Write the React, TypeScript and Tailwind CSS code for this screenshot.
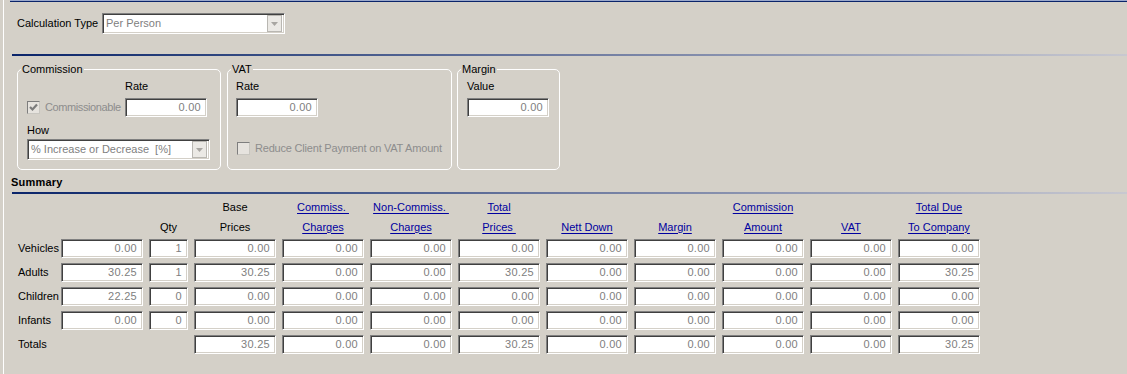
import React from "react";

const sunken =
  "border border-t-[#808080] border-l-[#808080] border-r-white border-b-white shadow-[inset_1px_1px_0_#404040,inset_-1px_-1px_0_#d4d0c8] bg-white";

function Field({ value, className = "" }: { value?: string; className?: string }) {
  return (
    <div
      className={`${sunken} h-[19px] flex items-center justify-end pr-[5px] text-[#808080] tracking-[0.3px] ${className}`}
    >
      {value}
    </div>
  );
}

function Combo({ text, className = "" }: { text: string; className?: string }) {
  return (
    <div className={`${sunken} h-[21px] flex items-center pl-[3px] pr-[2px] text-[#808080] ${className}`}>
      <span className="flex-1 whitespace-pre">{text}</span>
      <div className="w-[15px] h-[17px] border border-[#b9b7b2] bg-[#ebe9e5] flex items-center justify-center">
        <svg width="7" height="4" viewBox="0 0 7 4">
          <path d="M0 0 H7 L3.5 4 Z" fill="#a8a6a2" />
        </svg>
      </div>
    </div>
  );
}

function CheckBox({ checked }: { checked?: boolean }) {
  return (
    <div className="w-[13px] h-[13px] border border-t-[#7e7e7e] border-l-[#7e7e7e] border-r-[#c8c6c0] border-b-[#c8c6c0] bg-[#e6e3de] flex items-center justify-center">
      {checked && (
        <svg width="9" height="9" viewBox="0 0 9 9">
          <path d="M1 4 L3.5 6.5 L8 1.5" stroke="#7c7c7c" strokeWidth="2.2" fill="none" />
        </svg>
      )}
    </div>
  );
}

function Group({ title, className = "", children }: { title: string; className?: string; children: React.ReactNode }) {
  return (
    <fieldset className={`border border-white rounded-[5px] h-[107px] ${className}`}>
      <legend className="ml-[3px] px-px leading-[13px]">{title}</legend>
      {children}
    </fieldset>
  );
}

function HeadLink({ text }: { text: string }) {
  return <span className="text-[#0000a0] underline underline-offset-[2px] whitespace-pre">{text}</span>;
}

const headTop: (React.ReactNode | null)[] = [
  null,
  null,
  null,
  "Base",
  <HeadLink text="Commiss. " />,
  <HeadLink text="Non-Commiss. " />,
  <HeadLink text="Total" />,
  null,
  null,
  <HeadLink text="Commission" />,
  null,
  <HeadLink text="Total Due" />,
];

const headBottom: (React.ReactNode | null)[] = [
  null,
  null,
  "Qty",
  "Prices",
  <HeadLink text="Charges" />,
  <HeadLink text="Charges" />,
  <HeadLink text="Prices " />,
  <HeadLink text="Nett Down" />,
  <HeadLink text="Margin" />,
  <HeadLink text="Amount" />,
  <HeadLink text="VAT" />,
  <HeadLink text="To Company" />,
];

const rows: { label: string; values: (string | null)[] }[] = [
  { label: "Vehicles", values: ["0.00", "1", "0.00", "0.00", "0.00", "0.00", "0.00", "0.00", "0.00", "0.00", "0.00"] },
  { label: "Adults", values: ["30.25", "1", "30.25", "0.00", "0.00", "30.25", "0.00", "0.00", "0.00", "0.00", "30.25"] },
  { label: "Children", values: ["22.25", "0", "0.00", "0.00", "0.00", "0.00", "0.00", "0.00", "0.00", "0.00", "0.00"] },
  { label: "Infants", values: ["0.00", "0", "0.00", "0.00", "0.00", "0.00", "0.00", "0.00", "0.00", "0.00", "0.00"] },
  { label: "Totals", values: [null, null, "30.25", "0.00", "0.00", "30.25", "0.00", "0.00", "0.00", "0.00", "30.25"] },
];

const cols = "grid grid-cols-[37px_82px_39px_repeat(9,82px)] gap-x-[6px]";

export default function App() {
  return (
    <div className="w-[1127px] h-[374px] overflow-hidden bg-[#d4d0c8] pl-[3px] text-[11px] leading-[13px] text-black font-['Liberation_Sans',Arial,sans-serif]">
      <div className="h-full border-l border-white flex flex-col">
        {/* top rule */}
        <div className="h-px ml-[6px] bg-[#9aa8cc]" />
        <div className="h-px ml-[6px] bg-[#0a246a]" />

        {/* Calculation type */}
        <div className="mt-[11px] pl-[13px] flex items-center">
          <span className="w-[85px] whitespace-nowrap">Calculation Type</span>
          <Combo text="Per Person" className="w-[183px]" />
        </div>

        <div className="mt-[20px] ml-[8px] h-[2px] bg-linear-to-r from-[#0a246a] via-[#6f7ba0] to-[#c8c8d0]" />

        {/* Commission / VAT / Margin */}
        <div className="mt-[7px] pl-[13px] flex">
          <Group title="Commission" className="w-[204px]">
            <div className="pl-[9px]">
              <div className="mt-[4px] ml-[98px]">Rate</div>
              <div className="mt-[5px] flex items-center">
                <div className="w-[98px] flex items-center">
                  <CheckBox checked />
                  <span className="ml-[5px] text-[#8d8d8d] whitespace-nowrap tracking-[-0.4px]">Commissionable</span>
                </div>
                <Field value="0.00" className="w-[82px]" />
              </div>
              <div className="mt-[7px]">How</div>
              <Combo text="% Increase or Decrease  [%]" className="mt-[2px] w-[183px]" />
            </div>
          </Group>

          <Group title="VAT" className="w-[225px] ml-[6px]">
            <div className="pl-[8px]">
              <div className="mt-[4px]">Rate</div>
              <Field value="0.00" className="mt-[5px] w-[82px]" />
              <div className="mt-[25px] ml-px flex items-center">
                <CheckBox />
                <span className="ml-[5px] text-[#8d8d8d] whitespace-nowrap tracking-[-0.2px]">Reduce Client Payment on VAT Amount</span>
              </div>
            </div>
          </Group>

          <Group title="Margin" className="w-[103px] ml-[5px]">
            <div className="pl-[9px]">
              <div className="mt-[4px]">Value</div>
              <Field value="0.00" className="mt-[5px] w-[82px]" />
            </div>
          </Group>
        </div>

        {/* Summary */}
        <div className="mt-[6px] pl-[7px] font-bold tracking-[0.2px]">Summary</div>
        <div className="mt-[3px] ml-[8px] h-[2px] bg-linear-to-r from-[#0a246a] via-[#6f7ba0] to-[#c8c8d0]" />

        <div className={`${cols} mt-[3px] pl-[14px] auto-rows-[20px]`}>
          {headTop.map((h, i) => (
            <div key={`t${i}`} className="flex items-center justify-center whitespace-nowrap">
              {h}
            </div>
          ))}
          {headBottom.map((h, i) => (
            <div key={`b${i}`} className="flex items-center justify-center whitespace-nowrap">
              {h}
            </div>
          ))}
        </div>

        <div className={`${cols} mt-[2px] pl-[14px] auto-rows-[19px] gap-y-[5px]`}>
          {rows.map((r) => (
            <React.Fragment key={r.label}>
              <div className="flex items-center whitespace-nowrap">{r.label}</div>
              {r.values.map((v, i) => (v === null ? <div key={i} /> : <Field key={i} value={v} />))}
            </React.Fragment>
          ))}
        </div>
      </div>
    </div>
  );
}
